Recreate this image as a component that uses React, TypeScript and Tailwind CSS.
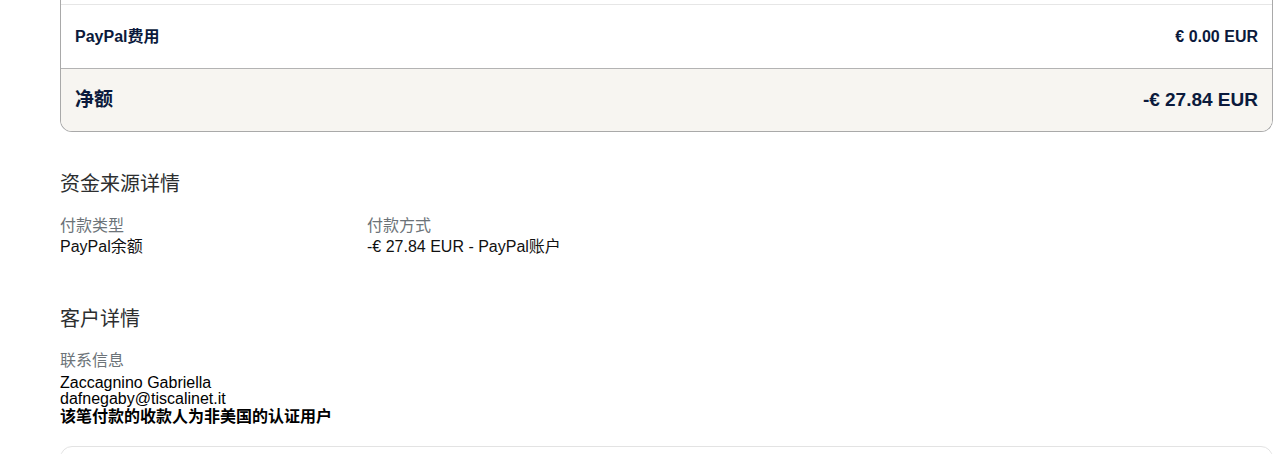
import React from "react";

const font = {
  fontFamily: '"Liberation Sans", Arial, "Noto Sans CJK SC", sans-serif',
};

interface InfoItem {
  label: string;
  value: string;
}

const fundingItems: InfoItem[] = [
  { label: "付款类型", value: "PayPal余额" },
  { label: "付款方式", value: "-€ 27.84 EUR - PayPal账户" },
];

export default function App() {
  return (
    <div className="h-[454px] overflow-hidden bg-white" style={font}>
      <div className="ml-[60px] w-[1213px]">
        {/* summary card, top part scrolled out of view */}
        <div className="overflow-hidden rounded-b-[12px] border-x border-b border-[#a9a9a9]">
          <div className="h-[5px] border-b border-[#e6e6e6]" />
          <div className="flex h-[64px] items-center justify-between border-b border-[#b3b3b3] bg-white px-[14px] text-[#0b1a3c]">
            <span className="text-[16px] font-bold">PayPal费用</span>
            <span className="text-[16px] font-bold">€ 0.00 EUR</span>
          </div>
          <div className="flex h-[62px] items-center justify-between bg-[#f7f5f1] px-[14px] text-[#0b1a3c]">
            <span className="text-[19px] font-bold">净额</span>
            <span className="text-[19px] font-bold">-€ 27.84 EUR</span>
          </div>
        </div>

        <h2 className="mt-[38px] text-[20px] leading-[28px] text-[#2c2e2f]">
          资金来源详情
        </h2>
        <div className="mt-[17px] grid grid-cols-[307px_1fr]">
          {fundingItems.map((item) => (
            <div key={item.label} className="text-[16px] leading-[21px]">
              <p className="text-[#6c7378]">{item.label}</p>
              <p className="text-[#111]">{item.value}</p>
            </div>
          ))}
        </div>

        <h2 className="mt-[48px] text-[20px] leading-[28px] text-[#2c2e2f]">
          客户详情
        </h2>
        <p className="mt-[17px] text-[16px] leading-[21px] text-[#6c7378]">
          联系信息
        </p>
        <div className="mt-[4px] text-[16px] text-black">
          <p className="leading-[16px]">Zaccagnino Gabriella</p>
          <p className="leading-[16px]">dafnegaby@tiscalinet.it</p>
          <p className="font-bold leading-[20px]">该笔付款的收款人为非美国的认证用户</p>
        </div>

        {/* next card, cut off at the bottom */}
        <div className="mt-[19px] h-[40px] rounded-t-[12px] border border-[#e3e3e3]" />
      </div>
    </div>
  );
}
